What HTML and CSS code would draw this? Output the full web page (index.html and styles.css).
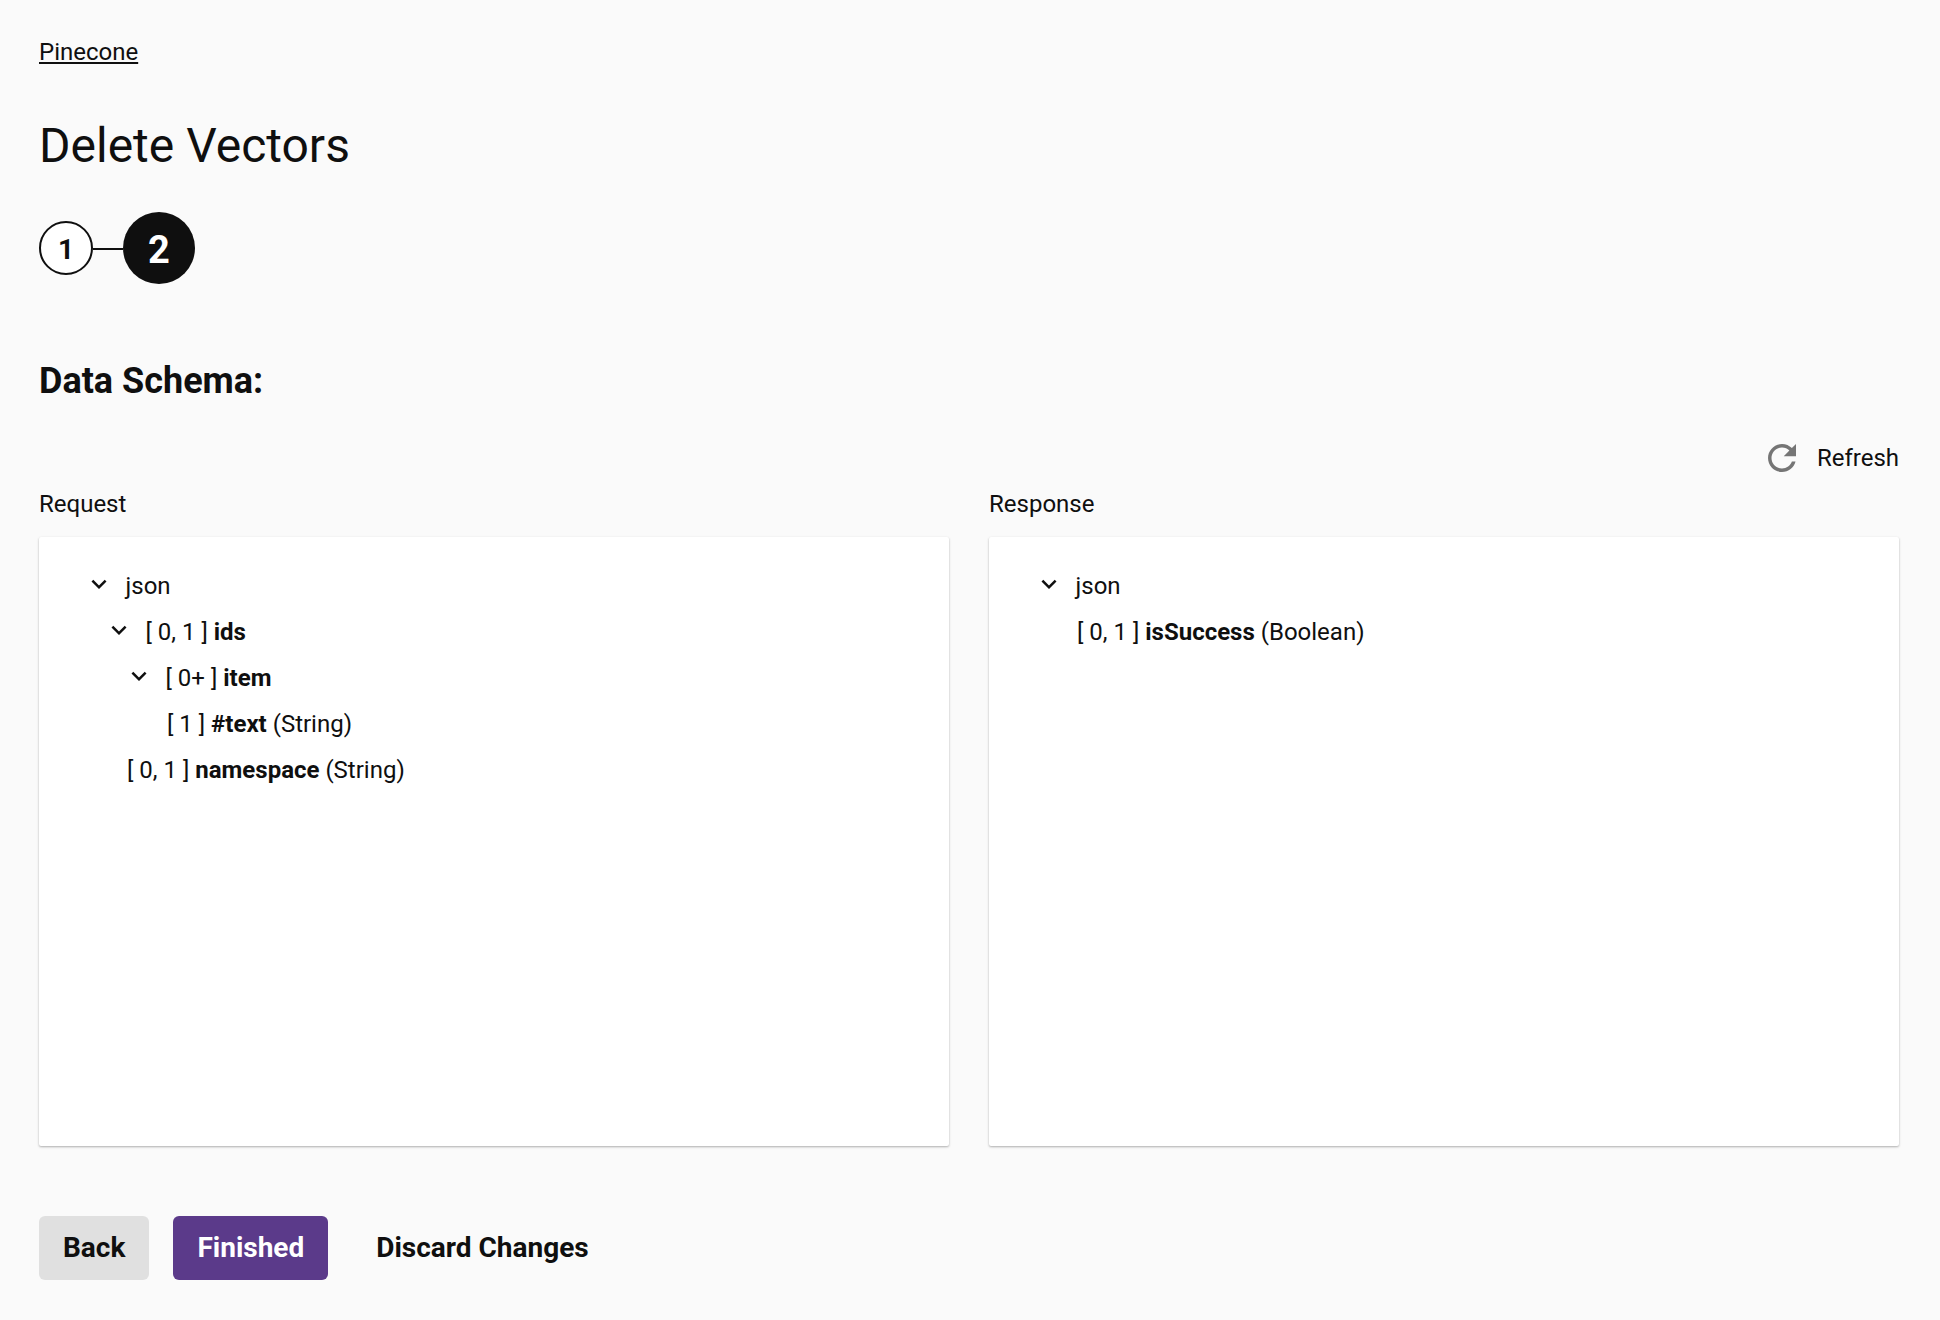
FILE: index.html
```html
<!DOCTYPE html>
<html lang="en">
<head>
<meta charset="utf-8">
<title>Delete Vectors</title>
<link rel="stylesheet" href="styles.css">
</head>
<body>
<main class="page">
  <a class="crumb" href="#">Pinecone</a>
  <h1 class="title">Delete Vectors</h1>
  <div class="stepper">
    <div class="step step-done">1</div>
    <div class="step-line"></div>
    <div class="step step-active">2</div>
  </div>
  <h2 class="section">Data Schema:</h2>
  <div class="toolbar">
    <button class="refresh" type="button">
      <svg class="refresh-icon" viewBox="0 0 24 24"><path d="M17.65 6.35C16.2 4.9 14.21 4 12 4c-4.42 0-7.99 3.58-7.99 8s3.57 8 7.99 8c3.73 0 6.84-2.55 7.73-6h-2.08c-.82 2.33-3.04 4-5.65 4-3.31 0-6-2.69-6-6s2.69-6 6-6c1.66 0 3.14.69 4.22 1.78L13 11h7V4l-2.35 2.35z"/></svg>
      <span>Refresh</span>
    </button>
  </div>
  <div class="schemas">
    <section class="schema">
      <div class="schema-label">Request</div>
      <div class="panel">
        <div class="row branch d0"><svg class="chev" viewBox="0 0 24 24"><path d="M16.59 8.59L12 13.17 7.41 8.59 6 10l6 6 6-6z"/></svg><span>json</span></div>
        <div class="row branch d1"><svg class="chev" viewBox="0 0 24 24"><path d="M16.59 8.59L12 13.17 7.41 8.59 6 10l6 6 6-6z"/></svg><span>[ 0, 1 ] <b>ids</b></span></div>
        <div class="row branch d2"><svg class="chev" viewBox="0 0 24 24"><path d="M16.59 8.59L12 13.17 7.41 8.59 6 10l6 6 6-6z"/></svg><span>[ 0+ ] <b>item</b></span></div>
        <div class="row leaf d3"><span>[ 1 ] <b>#text</b> (String)</span></div>
        <div class="row leaf d1"><span>[ 0, 1 ] <b>namespace</b> (String)</span></div>
      </div>
    </section>
    <section class="schema">
      <div class="schema-label">Response</div>
      <div class="panel">
        <div class="row branch d0"><svg class="chev" viewBox="0 0 24 24"><path d="M16.59 8.59L12 13.17 7.41 8.59 6 10l6 6 6-6z"/></svg><span>json</span></div>
        <div class="row leaf d1"><span>[ 0, 1 ] <b>isSuccess</b> (Boolean)</span></div>
      </div>
    </section>
  </div>
  <div class="actions">
    <button class="btn btn-grey" type="button">Back</button>
    <button class="btn btn-primary" type="button">Finished</button>
    <button class="btn btn-text" type="button">Discard Changes</button>
  </div>
</main>
</body>
</html>
```

FILE: styles.css
```css
* { box-sizing: border-box; }
html, body { margin: 0; padding: 0; }
body {
  background: #fafafa;
  color: #0f0f0f;
  font-family: Roboto, "Liberation Sans", sans-serif;
  font-size: 24px;
  width: 1940px;
  height: 1320px;
  overflow: hidden;
}
.page { padding: 36px 41px 0 39px; }
.crumb {
  display: block;
  width: max-content;
  color: #0f0f0f;
  font-size: 24px;
  line-height: 32px;
  text-decoration: underline;
}
.title {
  margin: 50px 0 0;
  font-size: 48px;
  font-weight: 400;
  line-height: 56px;
}
.stepper {
  display: flex;
  align-items: center;
  margin-top: 38px;
  height: 72px;
}
.step {
  display: flex;
  align-items: center;
  justify-content: center;
  border-radius: 50%;
  font-weight: 700;
  flex: none;
}
.step-done {
  width: 54px;
  height: 54px;
  padding-top: 2px;
  border: 2px solid #0f0f0f;
  background: #fff;
  font-size: 28px;
}
.step-line { width: 30px; height: 2px; margin-top: 1px; background: #0f0f0f; }
.step-active {
  width: 72px;
  height: 72px;
  padding-top: 3px;
  background: #0f0f0f;
  color: #fff;
  font-size: 38px;
}
.section {
  margin: 75px 0 0;
  font-size: 36px;
  font-weight: 700;
  line-height: 44px;
}
.toolbar {
  display: flex;
  justify-content: flex-end;
  margin-top: 34px;
  height: 42px;
}
.refresh {
  display: flex;
  align-items: center;
  gap: 14px;
  padding: 0;
  border: 0;
  background: none;
  color: #0f0f0f;
  font: inherit;
}
.refresh-icon { width: 42px; height: 42px; fill: #757575; flex: none; }
.schemas {
  display: grid;
  grid-template-columns: 910px 910px;
  gap: 40px;
  margin-top: 7px;
}
.schema-label { line-height: 36px; height: 36px; margin-bottom: 15px; }
.panel {
  height: 609px;
  padding: 26px 0 0;
  background: #fff;
  box-shadow: 0 1px 3px rgba(0, 0, 0, 0.12), 0 1px 2px rgba(0, 0, 0, 0.2);
  border-radius: 2px;
}
.row {
  display: flex;
  align-items: center;
  height: 46px;
  white-space: nowrap;
}
.row b { font-weight: 700; }
.chev { width: 30px; height: 30px; fill: #0f0f0f; flex: none; margin: -4px 12px 0 -1px; }
.branch.d0 { padding-left: 45.5px; }
.branch.d1 { padding-left: 65.5px; }
.branch.d2 { padding-left: 85.5px; }
.leaf.d1 { padding-left: 88px; }
.leaf.d3 { padding-left: 128px; }
.actions {
  display: flex;
  gap: 24px;
  margin-top: 70px;
}
.btn {
  height: 64px;
  padding: 0 24px 2px;
  border: 0;
  border-radius: 6px;
  font-family: inherit;
  font-size: 28px;
  font-weight: 700;
}
.btn-grey { background: #e0e0e0; color: #0f0f0f; }
.btn-primary { background: #5b3a8a; color: #fff; }
.btn-text { background: none; color: #0f0f0f; }
```
